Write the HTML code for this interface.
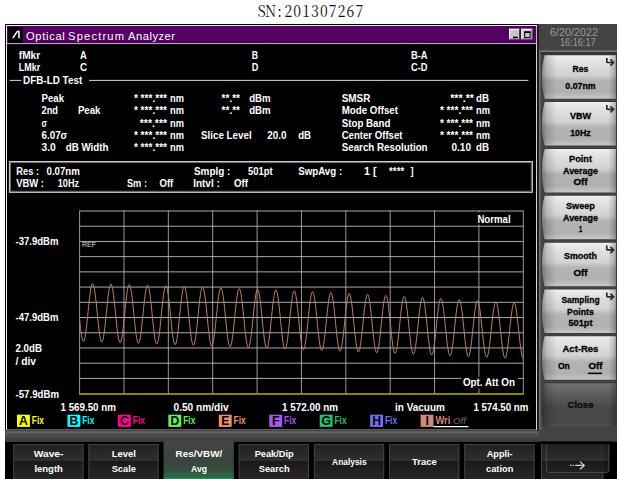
<!DOCTYPE html>
<html><head><meta charset="utf-8"><title>Optical Spectrum Analyzer</title>
<style>html,body{margin:0;padding:0;background:#fff;}body{width:617px;height:479px;overflow:hidden;font-family:"Liberation Sans", sans-serif;}</style>
</head><body>
<svg width="617" height="479" viewBox="0 0 617 479" font-family='"Liberation Sans", sans-serif' style="display:block">
<defs>
<linearGradient id="gbtn" x1="0" y1="0" x2="0" y2="1">
<stop offset="0" stop-color="#efefef"/><stop offset="0.12" stop-color="#e4e4e4"/><stop offset="0.45" stop-color="#d2d2d2"/><stop offset="0.58" stop-color="#b4b4b4"/><stop offset="0.85" stop-color="#b0b0b0"/><stop offset="1" stop-color="#c8c8c8"/>
</linearGradient>
<linearGradient id="gclose" x1="0" y1="0" x2="0" y2="1">
<stop offset="0" stop-color="#747474"/><stop offset="0.2" stop-color="#626262"/><stop offset="0.55" stop-color="#494949"/><stop offset="0.9" stop-color="#484848"/><stop offset="1" stop-color="#505050"/>
</linearGradient>
<linearGradient id="gside" x1="0" y1="0" x2="1" y2="0">
<stop offset="0" stop-color="#000" stop-opacity="0.34"/><stop offset="0.07" stop-color="#000" stop-opacity="0.14"/><stop offset="0.2" stop-color="#000" stop-opacity="0"/><stop offset="0.9" stop-color="#000" stop-opacity="0"/><stop offset="1" stop-color="#000" stop-opacity="0.24"/>
</linearGradient>
<linearGradient id="gbot1" gradientUnits="userSpaceOnUse" x1="0" y1="444" x2="0" y2="479">
<stop offset="0" stop-color="#202020"/><stop offset="0.47" stop-color="#2f2f2f"/><stop offset="0.5" stop-color="#1a1a1a"/><stop offset="1" stop-color="#272727"/>
</linearGradient>
<linearGradient id="gbotA" x1="0" y1="0" x2="0" y2="1">
<stop offset="0" stop-color="#464646"/><stop offset="0.45" stop-color="#3c423e"/><stop offset="0.75" stop-color="#33503f"/><stop offset="0.92" stop-color="#2e6a4a"/><stop offset="1" stop-color="#4cc485"/>
</linearGradient>
<linearGradient id="gband" x1="0" y1="0" x2="0" y2="1">
<stop offset="0" stop-color="#565656"/><stop offset="1" stop-color="#3a3a3a"/>
</linearGradient>
</defs>
<rect x="0.00" y="0.00" width="617.00" height="479.00" fill="#fff" />
<text transform="scale(0.86,1)" x="304.34 314.66 324.97 335.28 345.60 355.91 366.23 376.54 386.85 397.17 407.48 417.80" y="17" text-anchor="middle" font-size="16.4" fill="#111" font-family='"Noto Serif CJK SC", "Liberation Serif", serif'>SN:201307267</text>
<rect x="5.00" y="24.00" width="612.00" height="455.00" fill="#444" />
<rect x="5.00" y="24.00" width="533.70" height="407.00" fill="#000" />
<rect x="6.5" y="25.5" width="530.1" height="404.6" fill="none" stroke="#eee" stroke-width="1"/>
<rect x="7.00" y="26.00" width="529.10" height="17.20" fill="#540062" />
<rect x="8.00" y="27.00" width="15.00" height="15.80" fill="#000" />
<line x1="7.00" y1="43.60" x2="536.30" y2="43.60" stroke="#d0d0d0" stroke-width="0.9" />
<path d="M12.7 38.1 L17.3 31.5 L19 31.5 L19 38.3" fill="none" stroke="#fff" stroke-width="1.5"/>
<text x="26.0" y="40.3" font-size="11.2" font-weight="normal" fill="#fff" textLength="38.8" lengthAdjust="spacing" >Optical</text>
<text x="68.0" y="40.3" font-size="11.2" font-weight="normal" fill="#fff" textLength="56.1" lengthAdjust="spacing" >Spectrum</text>
<text x="128.0" y="40.3" font-size="11.2" font-weight="normal" fill="#fff" textLength="47.0" lengthAdjust="spacing" >Analyzer</text>
<rect x="509.20" y="28.80" width="10.80" height="11.00" fill="#c6c6c6" />
<line x1="509.20" y1="29.30" x2="520.00" y2="29.30" stroke="#fff" stroke-width="1" />
<line x1="509.70" y1="28.80" x2="509.70" y2="39.80" stroke="#fff" stroke-width="1" />
<line x1="509.20" y1="39.30" x2="520.00" y2="39.30" stroke="#404040" stroke-width="1" />
<line x1="519.50" y1="28.80" x2="519.50" y2="39.80" stroke="#404040" stroke-width="1" />
<rect x="513.00" y="36.60" width="4.80" height="1.60" fill="#000" />
<rect x="521.30" y="28.80" width="11.40" height="11.00" fill="#c6c6c6" />
<line x1="521.30" y1="29.30" x2="532.70" y2="29.30" stroke="#fff" stroke-width="1" />
<line x1="521.80" y1="28.80" x2="521.80" y2="39.80" stroke="#fff" stroke-width="1" />
<line x1="521.30" y1="39.30" x2="532.70" y2="39.30" stroke="#404040" stroke-width="1" />
<line x1="532.20" y1="28.80" x2="532.20" y2="39.80" stroke="#404040" stroke-width="1" />
<rect x="524.7" y="32.2" width="5.4" height="5.4" fill="none" stroke="#000" stroke-width="1"/>
<rect x="524.20" y="31.30" width="6.40" height="1.60" fill="#000" />
<text x="18.8" y="58.9" font-size="10.8" font-weight="bold" fill="#fff" textLength="21.4" lengthAdjust="spacingAndGlyphs" >fMkr</text>
<text x="79.9" y="58.9" font-size="10.8" font-weight="bold" fill="#fff" textLength="6.8" lengthAdjust="spacingAndGlyphs" >A</text>
<text x="251.7" y="58.9" font-size="10.8" font-weight="bold" fill="#fff" textLength="6.3" lengthAdjust="spacingAndGlyphs" >B</text>
<text x="411.0" y="58.9" font-size="10.8" font-weight="bold" fill="#fff" textLength="16.6" lengthAdjust="spacingAndGlyphs" >B-A</text>
<text x="18.8" y="71.0" font-size="10.8" font-weight="bold" fill="#fff" textLength="21.4" lengthAdjust="spacingAndGlyphs" >LMkr</text>
<text x="79.9" y="71.0" font-size="10.8" font-weight="bold" fill="#fff" textLength="7.1" lengthAdjust="spacingAndGlyphs" >C</text>
<text x="251.7" y="71.0" font-size="10.8" font-weight="bold" fill="#fff" textLength="6.6" lengthAdjust="spacingAndGlyphs" >D</text>
<text x="411.0" y="71.0" font-size="10.8" font-weight="bold" fill="#fff" textLength="16.6" lengthAdjust="spacingAndGlyphs" >C-D</text>
<line x1="9.50" y1="80.40" x2="21.40" y2="80.40" stroke="#d8d8d8" stroke-width="1" />
<line x1="89.20" y1="80.40" x2="528.40" y2="80.40" stroke="#d8d8d8" stroke-width="1" />
<text x="23.1" y="84.1" font-size="10.8" font-weight="bold" fill="#fff" textLength="59.1" lengthAdjust="spacingAndGlyphs" >DFB-LD Test</text>
<text x="41.5" y="102.1" font-size="10.8" font-weight="bold" fill="#fff" textLength="22.5" lengthAdjust="spacingAndGlyphs" >Peak</text>
<text x="41.5" y="114.3" font-size="10.8" font-weight="bold" fill="#fff" textLength="16.5" lengthAdjust="spacingAndGlyphs" >2nd</text>
<text x="77.9" y="114.3" font-size="10.8" font-weight="bold" fill="#fff" textLength="22.6" lengthAdjust="spacingAndGlyphs" >Peak</text>
<text x="41.5" y="126.6" font-size="10.8" font-weight="bold" fill="#fff" textLength="5.5" lengthAdjust="spacingAndGlyphs" >σ</text>
<text x="41.5" y="138.8" font-size="10.8" font-weight="bold" fill="#fff" textLength="25.8" lengthAdjust="spacingAndGlyphs" >6.07σ</text>
<text x="41.5" y="151.1" font-size="10.8" font-weight="bold" fill="#fff" textLength="14.3" lengthAdjust="spacingAndGlyphs" >3.0</text>
<text x="65.8" y="151.1" font-size="10.8" font-weight="bold" fill="#fff" textLength="42.7" lengthAdjust="spacingAndGlyphs" >dB Width</text>
<text x="133.9" y="102.1" font-size="10.8" font-weight="bold" fill="#fff" textLength="33.1" lengthAdjust="spacingAndGlyphs" >* ***.***</text>
<text x="170.0" y="102.1" font-size="10.8" font-weight="bold" fill="#fff" textLength="13.9" lengthAdjust="spacingAndGlyphs" >nm</text>
<text x="133.9" y="114.3" font-size="10.8" font-weight="bold" fill="#fff" textLength="33.1" lengthAdjust="spacingAndGlyphs" >* ***.***</text>
<text x="170.0" y="114.3" font-size="10.8" font-weight="bold" fill="#fff" textLength="13.9" lengthAdjust="spacingAndGlyphs" >nm</text>
<text x="139.8" y="126.6" font-size="10.8" font-weight="bold" fill="#fff" textLength="27.2" lengthAdjust="spacingAndGlyphs" >***.***</text>
<text x="170.0" y="126.6" font-size="10.8" font-weight="bold" fill="#fff" textLength="13.9" lengthAdjust="spacingAndGlyphs" >nm</text>
<text x="133.9" y="138.8" font-size="10.8" font-weight="bold" fill="#fff" textLength="33.1" lengthAdjust="spacingAndGlyphs" >* ***.***</text>
<text x="170.0" y="138.8" font-size="10.8" font-weight="bold" fill="#fff" textLength="13.9" lengthAdjust="spacingAndGlyphs" >nm</text>
<text x="133.9" y="151.1" font-size="10.8" font-weight="bold" fill="#fff" textLength="33.1" lengthAdjust="spacingAndGlyphs" >* ***.***</text>
<text x="170.0" y="151.1" font-size="10.8" font-weight="bold" fill="#fff" textLength="13.9" lengthAdjust="spacingAndGlyphs" >nm</text>
<text x="221.6" y="102.1" font-size="10.8" font-weight="bold" fill="#fff" textLength="18.4" lengthAdjust="spacingAndGlyphs" >**.**</text>
<text x="249.2" y="102.1" font-size="10.8" font-weight="bold" fill="#fff" textLength="21.4" lengthAdjust="spacingAndGlyphs" >dBm</text>
<text x="221.6" y="114.3" font-size="10.8" font-weight="bold" fill="#fff" textLength="18.4" lengthAdjust="spacingAndGlyphs" >**.**</text>
<text x="249.2" y="114.3" font-size="10.8" font-weight="bold" fill="#fff" textLength="21.4" lengthAdjust="spacingAndGlyphs" >dBm</text>
<text x="201.0" y="138.8" font-size="10.8" font-weight="bold" fill="#fff" textLength="50.7" lengthAdjust="spacingAndGlyphs" >Slice Level</text>
<text x="267.3" y="138.8" font-size="10.8" font-weight="bold" fill="#fff" textLength="19.1" lengthAdjust="spacingAndGlyphs" >20.0</text>
<text x="298.2" y="138.8" font-size="10.8" font-weight="bold" fill="#fff" textLength="12.8" lengthAdjust="spacingAndGlyphs" >dB</text>
<text x="341.7" y="102.1" font-size="10.8" font-weight="bold" fill="#fff" textLength="28.6" lengthAdjust="spacingAndGlyphs" >SMSR</text>
<text x="341.7" y="114.3" font-size="10.8" font-weight="bold" fill="#fff" textLength="56.3" lengthAdjust="spacingAndGlyphs" >Mode Offset</text>
<text x="341.7" y="126.6" font-size="10.8" font-weight="bold" fill="#fff" textLength="48.7" lengthAdjust="spacingAndGlyphs" >Stop Band</text>
<text x="341.7" y="138.8" font-size="10.8" font-weight="bold" fill="#fff" textLength="60.8" lengthAdjust="spacingAndGlyphs" >Center Offset</text>
<text x="341.7" y="151.1" font-size="10.8" font-weight="bold" fill="#fff" textLength="85.9" lengthAdjust="spacingAndGlyphs" >Search Resolution</text>
<text x="450.2" y="102.1" font-size="10.8" font-weight="bold" fill="#fff" textLength="23.8" lengthAdjust="spacingAndGlyphs" >***.**</text>
<text x="476.0" y="102.1" font-size="10.8" font-weight="bold" fill="#fff" textLength="13.0" lengthAdjust="spacingAndGlyphs" >dB</text>
<text x="439.9" y="114.3" font-size="10.8" font-weight="bold" fill="#fff" textLength="33.1" lengthAdjust="spacingAndGlyphs" >* ***.***</text>
<text x="476.0" y="114.3" font-size="10.8" font-weight="bold" fill="#fff" textLength="14.0" lengthAdjust="spacingAndGlyphs" >nm</text>
<text x="439.9" y="126.6" font-size="10.8" font-weight="bold" fill="#fff" textLength="33.1" lengthAdjust="spacingAndGlyphs" >* ***.***</text>
<text x="476.0" y="126.6" font-size="10.8" font-weight="bold" fill="#fff" textLength="14.0" lengthAdjust="spacingAndGlyphs" >nm</text>
<text x="439.9" y="138.8" font-size="10.8" font-weight="bold" fill="#fff" textLength="33.1" lengthAdjust="spacingAndGlyphs" >* ***.***</text>
<text x="476.0" y="138.8" font-size="10.8" font-weight="bold" fill="#fff" textLength="14.0" lengthAdjust="spacingAndGlyphs" >nm</text>
<text x="451.5" y="151.1" font-size="10.8" font-weight="bold" fill="#fff" textLength="19.5" lengthAdjust="spacingAndGlyphs" >0.10</text>
<text x="476.0" y="151.1" font-size="10.8" font-weight="bold" fill="#fff" textLength="13.0" lengthAdjust="spacingAndGlyphs" >dB</text>
<rect x="9.4" y="161.6" width="522.9" height="30.7" fill="none" stroke="#e4e4e4" stroke-width="1"/>
<rect x="10.4" y="162.6" width="520.9" height="28.7" fill="none" stroke="#777" stroke-width="1"/>
<text x="16.3" y="174.7" font-size="10.8" font-weight="bold" fill="#fff" textLength="22.7" lengthAdjust="spacingAndGlyphs" >Res :</text>
<text x="46.5" y="174.7" font-size="10.8" font-weight="bold" fill="#fff" textLength="33.4" lengthAdjust="spacingAndGlyphs" >0.07nm</text>
<text x="194.0" y="174.7" font-size="10.8" font-weight="bold" fill="#fff" textLength="36.4" lengthAdjust="spacingAndGlyphs" >Smplg :</text>
<text x="248.0" y="174.7" font-size="10.8" font-weight="bold" fill="#fff" textLength="24.6" lengthAdjust="spacingAndGlyphs" >501pt</text>
<text x="298.2" y="174.7" font-size="10.8" font-weight="bold" fill="#fff" textLength="44.0" lengthAdjust="spacingAndGlyphs" >SwpAvg :</text>
<text x="364.0" y="174.7" font-size="10.8" font-weight="bold" fill="#fff" textLength="12.6" lengthAdjust="spacingAndGlyphs" >1 [</text>
<text x="389.1" y="174.7" font-size="10.8" font-weight="bold" fill="#fff" textLength="15.1" lengthAdjust="spacingAndGlyphs" >****</text>
<text x="410.5" y="174.7" font-size="10.8" font-weight="bold" fill="#fff" textLength="3.0" lengthAdjust="spacingAndGlyphs" >]</text>
<text x="16.3" y="186.5" font-size="10.8" font-weight="bold" fill="#fff" textLength="27.7" lengthAdjust="spacingAndGlyphs" >VBW :</text>
<text x="57.8" y="186.5" font-size="10.8" font-weight="bold" fill="#fff" textLength="21.3" lengthAdjust="spacingAndGlyphs" >10Hz</text>
<text x="126.9" y="186.5" font-size="10.8" font-weight="bold" fill="#fff" textLength="20.1" lengthAdjust="spacingAndGlyphs" >Sm :</text>
<text x="159.5" y="186.5" font-size="10.8" font-weight="bold" fill="#fff" textLength="13.8" lengthAdjust="spacingAndGlyphs" >Off</text>
<text x="193.2" y="186.5" font-size="10.8" font-weight="bold" fill="#fff" textLength="26.6" lengthAdjust="spacingAndGlyphs" >Intvl :</text>
<text x="234.1" y="186.5" font-size="10.8" font-weight="bold" fill="#fff" textLength="13.9" lengthAdjust="spacingAndGlyphs" >Off</text>
<line x1="79.60" y1="210.60" x2="79.60" y2="394.00" stroke="#a8a8a8" stroke-width="0.9" />
<line x1="123.97" y1="210.60" x2="123.97" y2="394.00" stroke="#a8a8a8" stroke-width="0.9" />
<line x1="168.34" y1="210.60" x2="168.34" y2="394.00" stroke="#a8a8a8" stroke-width="0.9" />
<line x1="212.71" y1="210.60" x2="212.71" y2="394.00" stroke="#a8a8a8" stroke-width="0.9" />
<line x1="257.08" y1="210.60" x2="257.08" y2="394.00" stroke="#a8a8a8" stroke-width="0.9" />
<line x1="301.45" y1="210.60" x2="301.45" y2="394.00" stroke="#a8a8a8" stroke-width="0.9" />
<line x1="345.82" y1="210.60" x2="345.82" y2="394.00" stroke="#a8a8a8" stroke-width="0.9" />
<line x1="390.19" y1="210.60" x2="390.19" y2="394.00" stroke="#a8a8a8" stroke-width="0.9" />
<line x1="434.56" y1="210.60" x2="434.56" y2="394.00" stroke="#a8a8a8" stroke-width="0.9" />
<line x1="478.93" y1="210.60" x2="478.93" y2="394.00" stroke="#a8a8a8" stroke-width="0.9" />
<line x1="523.30" y1="210.60" x2="523.30" y2="394.00" stroke="#a8a8a8" stroke-width="0.9" />
<line x1="79.60" y1="211.00" x2="523.30" y2="211.00" stroke="#bdbdbd" stroke-width="0.9" />
<line x1="79.60" y1="226.22" x2="523.30" y2="226.22" stroke="#bdbdbd" stroke-width="0.9" />
<line x1="79.60" y1="241.44" x2="523.30" y2="241.44" stroke="#bdbdbd" stroke-width="0.9" />
<line x1="79.60" y1="256.65" x2="523.30" y2="256.65" stroke="#bdbdbd" stroke-width="0.9" />
<line x1="79.60" y1="271.87" x2="523.30" y2="271.87" stroke="#bdbdbd" stroke-width="0.9" />
<line x1="79.60" y1="287.09" x2="523.30" y2="287.09" stroke="#bdbdbd" stroke-width="0.9" />
<line x1="79.60" y1="302.31" x2="523.30" y2="302.31" stroke="#bdbdbd" stroke-width="0.9" />
<line x1="79.60" y1="317.53" x2="523.30" y2="317.53" stroke="#bdbdbd" stroke-width="0.9" />
<line x1="79.60" y1="332.75" x2="523.30" y2="332.75" stroke="#bdbdbd" stroke-width="0.9" />
<line x1="79.60" y1="347.96" x2="523.30" y2="347.96" stroke="#bdbdbd" stroke-width="0.9" />
<line x1="79.60" y1="363.18" x2="523.30" y2="363.18" stroke="#bdbdbd" stroke-width="0.9" />
<line x1="79.60" y1="378.40" x2="523.30" y2="378.40" stroke="#bdbdbd" stroke-width="0.9" />
<line x1="79.20" y1="394.00" x2="523.70" y2="394.00" stroke="#b8b000" stroke-width="1.7" />
<path d="M79.6 319.5 L80.1 324.2 L80.6 328.6 L81.1 332.4 L81.6 335.7 L82.1 338.3 L82.6 340.1 L83.1 341.1 L83.6 341.3 L84.1 340.6 L84.6 339.1 L85.1 336.8 L85.6 333.8 L86.1 330.1 L86.6 326.0 L87.1 321.4 L87.6 316.6 L88.1 311.6 L88.6 306.7 L89.1 302.0 L89.6 297.5 L90.1 293.5 L90.6 290.0 L91.1 287.2 L91.6 285.2 L92.1 283.9 L92.6 283.5 L93.1 284.0 L93.6 285.2 L94.1 287.3 L94.6 290.2 L95.1 293.6 L95.6 297.7 L96.1 302.2 L96.6 307.0 L97.1 311.9 L97.6 316.9 L98.1 321.8 L98.6 326.4 L99.1 330.6 L99.6 334.3 L100.1 337.3 L100.6 339.7 L101.1 341.2 L101.6 342.0 L102.1 341.8 L102.6 340.8 L103.1 339.1 L103.6 336.5 L104.1 333.2 L104.6 329.4 L105.1 325.1 L105.6 320.4 L106.1 315.5 L106.6 310.5 L107.1 305.6 L107.6 301.0 L108.1 296.6 L108.6 292.8 L109.1 289.5 L109.6 287.0 L110.1 285.2 L110.6 284.2 L111.1 284.1 L111.6 284.8 L112.1 286.4 L112.6 288.7 L113.1 291.8 L113.6 295.5 L114.1 299.7 L114.6 304.3 L115.1 309.2 L115.6 314.2 L116.1 319.2 L116.6 324.0 L117.1 328.5 L117.6 332.6 L118.1 336.0 L118.6 338.9 L119.1 341.0 L119.6 342.2 L120.1 342.7 L120.6 342.3 L121.1 341.0 L121.6 338.9 L122.1 336.1 L122.6 332.7 L123.1 328.6 L123.6 324.2 L124.1 319.4 L124.6 314.4 L125.1 309.5 L125.6 304.6 L126.1 300.0 L126.6 295.8 L127.1 292.2 L127.6 289.2 L128.1 286.8 L128.6 285.3 L129.1 284.6 L129.6 284.8 L130.1 285.8 L130.6 287.7 L131.1 290.3 L131.6 293.6 L132.1 297.5 L132.6 301.8 L133.1 306.6 L133.6 311.5 L134.1 316.5 L134.6 321.5 L135.1 326.2 L135.6 330.6 L136.1 334.5 L136.6 337.7 L137.1 340.3 L137.6 342.2 L138.1 343.2 L138.6 343.3 L139.1 342.6 L139.6 341.1 L140.1 338.7 L140.6 335.7 L141.1 332.0 L141.6 327.8 L142.1 323.2 L142.6 318.3 L143.1 313.4 L143.6 308.4 L144.1 303.6 L144.6 299.1 L145.1 295.1 L145.6 291.7 L146.1 288.9 L146.6 286.8 L147.1 285.6 L147.6 285.2 L148.1 285.6 L148.6 286.9 L149.1 289.1 L149.6 291.9 L150.1 295.4 L150.6 299.5 L151.1 304.0 L151.6 308.9 L152.1 313.9 L152.6 318.9 L153.1 323.8 L153.6 328.4 L154.1 332.6 L154.6 336.3 L155.1 339.4 L155.6 341.7 L156.1 343.3 L156.6 344.0 L157.1 343.8 L157.6 342.8 L158.1 341.0 L158.6 338.4 L159.1 335.2 L159.6 331.3 L160.1 326.9 L160.6 322.2 L161.1 317.3 L161.6 312.3 L162.1 307.4 L162.6 302.7 L163.1 298.3 L163.6 294.5 L164.1 291.2 L164.6 288.7 L165.1 286.9 L165.6 286.0 L166.1 285.9 L166.6 286.6 L167.1 288.2 L167.6 290.6 L168.1 293.7 L168.6 297.4 L169.1 301.7 L169.6 306.3 L170.1 311.2 L170.6 316.2 L171.1 321.2 L171.6 326.1 L172.1 330.6 L172.6 334.6 L173.1 338.1 L173.6 341.0 L174.1 343.0 L174.6 344.3 L175.1 344.7 L175.6 344.3 L176.1 343.0 L176.6 340.9 L177.1 338.1 L177.6 334.6 L178.1 330.5 L178.6 326.0 L179.1 321.2 L179.6 316.3 L180.1 311.3 L180.6 306.4 L181.1 301.8 L181.6 297.6 L182.1 294.0 L182.6 290.9 L183.1 288.6 L183.6 287.1 L184.1 286.5 L184.6 286.7 L185.1 287.7 L185.6 289.6 L186.1 292.2 L186.6 295.5 L187.1 299.4 L187.6 303.9 L188.1 308.6 L188.6 313.6 L189.1 318.6 L189.6 323.6 L190.1 328.3 L190.6 332.7 L191.1 336.6 L191.6 339.9 L192.1 342.4 L192.6 344.3 L193.1 345.2 L193.6 345.4 L194.1 344.6 L194.6 343.1 L195.1 340.7 L195.6 337.7 L196.1 334.0 L196.6 329.7 L197.1 325.1 L197.6 320.2 L198.1 315.2 L198.6 310.3 L199.1 305.5 L199.6 301.0 L200.1 297.0 L200.6 293.5 L201.1 290.7 L201.6 288.7 L202.1 287.5 L202.6 287.1 L203.1 287.6 L203.6 288.9 L204.1 291.0 L204.6 293.9 L205.1 297.5 L205.6 301.6 L206.1 306.1 L206.6 311.0 L207.1 316.0 L207.6 321.0 L208.1 325.9 L208.6 330.5 L209.1 334.8 L209.6 338.5 L210.1 341.5 L210.6 343.8 L211.1 345.4 L211.6 346.1 L212.1 345.9 L212.6 344.9 L213.1 343.1 L213.6 340.5 L214.1 337.2 L214.6 333.3 L215.1 328.9 L215.6 324.2 L216.1 319.2 L216.6 314.2 L217.1 309.3 L217.6 304.6 L218.1 300.3 L218.6 296.4 L219.1 293.2 L219.6 290.7 L220.1 288.9 L220.6 288.0 L221.1 287.9 L221.6 288.6 L222.1 290.3 L222.6 292.7 L223.1 295.8 L223.6 299.5 L224.1 303.8 L224.6 308.4 L225.1 313.4 L225.6 318.4 L226.1 323.4 L226.6 328.2 L227.1 332.7 L227.6 336.8 L228.1 340.3 L228.6 343.1 L229.1 345.2 L229.6 346.4 L230.1 346.8 L230.6 346.4 L231.1 345.1 L231.6 343.0 L232.1 340.1 L232.6 336.6 L233.1 332.5 L233.6 328.0 L234.1 323.2 L234.6 318.2 L235.1 313.3 L235.6 308.4 L236.1 303.8 L236.6 299.6 L237.1 296.0 L237.6 293.0 L238.1 290.7 L238.6 289.2 L239.1 288.6 L239.6 288.8 L240.1 289.8 L240.6 291.7 L241.1 294.4 L241.6 297.7 L242.1 301.6 L242.6 306.1 L243.1 310.8 L243.6 315.8 L244.1 320.8 L244.6 325.8 L245.1 330.5 L245.6 334.9 L246.1 338.8 L246.6 342.0 L247.1 344.6 L247.6 346.4 L248.1 347.4 L248.6 347.5 L249.1 346.7 L249.6 345.2 L250.1 342.8 L250.6 339.7 L251.1 336.0 L251.6 331.8 L252.1 327.2 L252.6 322.3 L253.1 317.3 L253.6 312.3 L254.1 307.5 L254.6 303.1 L255.1 299.1 L255.6 295.6 L256.1 292.9 L256.6 290.8 L257.1 289.6 L257.6 289.3 L258.1 289.8 L258.6 291.1 L259.1 293.3 L259.6 296.2 L260.1 299.7 L260.6 303.8 L261.1 308.4 L261.6 313.2 L262.1 318.2 L262.6 323.3 L263.1 328.2 L263.6 332.8 L264.1 337.0 L264.6 340.7 L265.1 343.7 L265.6 346.0 L266.1 347.5 L266.6 348.2 L267.1 348.0 L267.6 347.0 L268.1 345.2 L268.6 342.5 L269.1 339.2 L269.6 335.3 L270.1 331.0 L270.6 326.3 L271.1 321.3 L271.6 316.3 L272.1 311.4 L272.6 306.7 L273.1 302.4 L273.6 298.6 L274.1 295.4 L274.6 292.9 L275.1 291.1 L275.6 290.2 L276.1 290.1 L276.6 290.9 L277.1 292.6 L277.6 295.0 L278.1 298.1 L278.6 301.9 L279.1 306.1 L279.6 310.8 L280.1 315.7 L280.6 320.7 L281.1 325.7 L281.6 330.5 L282.1 335.0 L282.6 339.0 L283.1 342.5 L283.6 345.3 L284.1 347.4 L284.6 348.6 L285.1 349.0 L285.6 348.5 L286.1 347.2 L286.6 345.1 L287.1 342.2 L287.6 338.7 L288.1 334.7 L288.6 330.2 L289.1 325.4 L289.6 320.4 L290.1 315.4 L290.6 310.6 L291.1 306.0 L291.6 301.9 L292.1 298.2 L292.6 295.3 L293.1 293.0 L293.6 291.5 L294.1 290.9 L294.6 291.1 L295.1 292.2 L295.6 294.1 L296.1 296.8 L296.6 300.1 L297.1 304.1 L297.6 308.5 L298.1 313.2 L298.6 318.2 L299.1 323.2 L299.6 328.1 L300.1 332.8 L300.6 337.2 L301.1 341.0 L301.6 344.3 L302.1 346.8 L302.6 348.6 L303.1 349.6 L303.6 349.7 L304.1 348.9 L304.6 347.3 L305.1 344.9 L305.6 341.9 L306.1 338.1 L306.6 333.9 L307.1 329.3 L307.6 324.5 L308.1 319.5 L308.6 314.6 L309.1 309.8 L309.6 305.4 L310.1 301.4 L310.6 298.0 L311.1 295.2 L311.6 293.3 L312.1 292.1 L312.6 291.7 L313.1 292.3 L313.6 293.6 L314.1 295.8 L314.6 298.7 L315.1 302.2 L315.6 306.3 L316.1 310.9 L316.6 315.7 L317.1 320.7 L317.6 325.7 L318.1 330.5 L318.6 335.1 L319.1 339.3 L319.6 343.0 L320.1 346.0 L320.6 348.3 L321.1 349.8 L321.6 350.4 L322.1 350.2 L322.6 349.2 L323.1 347.3 L323.6 344.7 L324.1 341.4 L324.6 337.5 L325.1 333.2 L325.6 328.5 L326.1 323.6 L326.6 318.6 L327.1 313.7 L327.6 309.1 L328.1 304.8 L328.6 301.0 L329.1 297.8 L329.6 295.3 L330.1 293.6 L330.6 292.7 L331.1 292.7 L331.6 293.5 L332.1 295.1 L332.6 297.5 L333.1 300.7 L333.6 304.4 L334.1 308.7 L334.6 313.3 L335.1 318.2 L335.6 323.2 L336.1 328.2 L336.6 332.9 L337.1 337.4 L337.6 341.4 L338.1 344.8 L338.6 347.6 L339.1 349.6 L339.6 350.8 L340.1 351.2 L340.6 350.7 L341.1 349.4 L341.6 347.3 L342.1 344.4 L342.6 340.9 L343.1 336.9 L343.6 332.4 L344.1 327.6 L344.6 322.7 L345.1 317.8 L345.6 313.0 L346.1 308.4 L346.6 304.3 L347.1 300.7 L347.6 297.8 L348.1 295.6 L348.6 294.1 L349.1 293.5 L349.6 293.8 L350.1 294.9 L350.6 296.8 L351.1 299.4 L351.6 302.8 L352.1 306.7 L352.6 311.1 L353.1 315.8 L353.6 320.7 L354.1 325.7 L354.6 330.6 L355.1 335.3 L355.6 339.6 L356.1 343.4 L356.6 346.6 L357.1 349.1 L357.6 350.9 L358.1 351.8 L358.6 351.9 L359.1 351.1 L359.6 349.5 L360.1 347.1 L360.6 344.1 L361.1 340.4 L361.6 336.2 L362.1 331.6 L362.6 326.8 L363.1 321.9 L363.6 317.0 L364.1 312.3 L364.6 307.9 L365.1 303.9 L365.6 300.6 L366.1 297.9 L366.6 295.9 L367.1 294.8 L367.6 294.5 L368.1 295.0 L368.6 296.4 L369.1 298.5 L369.6 301.4 L370.1 304.9 L370.6 309.0 L371.1 313.5 L371.6 318.3 L372.1 323.3 L372.6 328.2 L373.1 333.1 L373.6 337.6 L374.1 341.7 L374.6 345.3 L375.1 348.3 L375.6 350.6 L376.1 352.0 L376.6 352.7 L377.1 352.5 L377.6 351.4 L378.1 349.6 L378.6 347.0 L379.1 343.7 L379.6 339.8 L380.1 335.5 L380.6 330.8 L381.1 326.0 L381.6 321.1 L382.1 316.2 L382.6 311.6 L383.1 307.4 L383.6 303.7 L384.1 300.5 L384.6 298.1 L385.1 296.4 L385.6 295.5 L386.1 295.5 L386.6 296.3 L387.1 298.0 L387.6 300.4 L388.1 303.5 L388.6 307.2 L389.1 311.4 L389.6 316.0 L390.1 320.9 L390.6 325.8 L391.1 330.7 L391.6 335.5 L392.1 339.9 L392.6 343.8 L393.1 347.2 L393.6 349.9 L394.1 351.9 L394.6 353.1 L395.1 353.5 L395.6 353.0 L396.1 351.6 L396.6 349.5 L397.1 346.7 L397.6 343.2 L398.1 339.2 L398.6 334.8 L399.1 330.0 L399.6 325.2 L400.1 320.3 L400.6 315.5 L401.1 311.1 L401.6 307.0 L402.1 303.5 L402.6 300.6 L403.1 298.4 L403.6 297.0 L404.1 296.4 L404.6 296.7 L405.1 297.8 L405.6 299.7 L406.1 302.3 L406.6 305.6 L407.1 309.5 L407.6 313.9 L408.1 318.6 L408.6 323.4 L409.1 328.4 L409.6 333.2 L410.1 337.8 L410.6 342.1 L411.1 345.8 L411.6 349.0 L412.1 351.5 L412.6 353.2 L413.1 354.1 L413.6 354.1 L414.1 353.4 L414.6 351.8 L415.1 349.4 L415.6 346.4 L416.1 342.7 L416.6 338.6 L417.1 334.0 L417.6 329.3 L418.1 324.4 L418.6 319.6 L419.1 314.9 L419.6 310.6 L420.1 306.7 L420.6 303.4 L421.1 300.8 L421.6 298.8 L422.1 297.7 L422.6 297.4 L423.1 298.0 L423.6 299.4 L424.1 301.5 L424.6 304.4 L425.1 307.9 L425.6 311.9 L426.1 316.4 L426.6 321.1 L427.1 326.0 L427.6 330.9 L428.1 335.7 L428.6 340.2 L429.1 344.2 L429.6 347.8 L430.1 350.7 L430.6 352.9 L431.1 354.4 L431.6 355.0 L432.1 354.7 L432.6 353.7 L433.1 351.9 L433.6 349.3 L434.1 346.0 L434.6 342.2 L435.1 337.9 L435.6 333.3 L436.1 328.5 L436.6 323.7 L437.1 318.9 L437.6 314.4 L438.1 310.2 L438.6 306.5 L439.1 303.5 L439.6 301.1 L440.1 299.4 L440.6 298.6 L441.1 298.6 L441.6 299.4 L442.1 301.0 L442.6 303.4 L443.1 306.5 L443.6 310.2 L444.1 314.4 L444.6 318.9 L445.1 323.7 L445.6 328.6 L446.1 333.4 L446.6 338.1 L447.1 342.4 L447.6 346.3 L448.1 349.7 L448.6 352.3 L449.1 354.3 L449.6 355.4 L450.1 355.8 L450.6 355.3 L451.1 353.9 L451.6 351.8 L452.1 349.0 L452.6 345.6 L453.1 341.6 L453.6 337.3 L454.1 332.6 L454.6 327.8 L455.1 323.0 L455.6 318.3 L456.1 313.9 L456.6 309.9 L457.1 306.5 L457.6 303.6 L458.1 301.5 L458.6 300.1 L459.1 299.6 L459.6 299.8 L460.1 300.9 L460.6 302.8 L461.1 305.5 L461.6 308.7 L462.1 312.6 L462.6 316.9 L463.1 321.5 L463.6 326.3 L464.1 331.2 L464.6 335.9 L465.1 340.5 L465.6 344.7 L466.1 348.4 L466.6 351.5 L467.1 353.9 L467.6 355.6 L468.1 356.4 L468.6 356.5 L469.1 355.7 L469.6 354.1 L470.1 351.8 L470.6 348.8 L471.1 345.2 L471.6 341.1 L472.1 336.6 L472.6 331.9 L473.1 327.1 L473.6 322.4 L474.1 317.8 L474.6 313.5 L475.1 309.7 L475.6 306.5 L476.1 303.9 L476.6 302.0 L477.1 300.9 L477.6 300.7 L478.1 301.2 L478.6 302.6 L479.1 304.7 L479.6 307.6 L480.1 311.0 L480.6 315.0 L481.1 319.4 L481.6 324.1 L482.1 328.9 L482.6 333.7 L483.1 338.4 L483.6 342.8 L484.1 346.8 L484.6 350.3 L485.1 353.2 L485.6 355.3 L486.1 356.7 L486.6 357.3 L487.1 357.1 L487.6 356.0 L488.1 354.2 L488.6 351.7 L489.1 348.4 L489.6 344.7 L490.1 340.5 L490.6 335.9 L491.1 331.2 L491.6 326.5 L492.1 321.8 L492.6 317.3 L493.1 313.3 L493.6 309.7 L494.1 306.6 L494.6 304.3 L495.1 302.7 L495.6 301.9 L496.1 301.9 L496.6 302.8 L497.1 304.4 L497.6 306.7 L498.1 309.8 L498.6 313.4 L499.1 317.5 L499.6 322.0 L500.1 326.7 L500.6 331.5 L501.1 336.3 L501.6 340.9 L502.1 345.1 L502.6 348.9 L503.1 352.2 L503.6 354.8 L504.1 356.7 L504.6 357.8 L505.1 358.1 L505.6 357.6 L506.1 356.3 L506.6 354.2 L507.1 351.5 L507.6 348.1 L508.1 344.2 L508.6 339.9 L509.1 335.3 L509.6 330.6 L510.1 325.9 L510.6 321.3 L511.1 317.0 L511.6 313.1 L512.1 309.7 L512.6 306.9 L513.1 304.8 L513.6 303.5 L514.1 303.0 L514.6 303.3 L515.1 304.4 L515.6 306.3 L516.1 308.8 L516.6 312.1 L517.1 315.9 L517.6 320.1 L518.1 324.6 L518.6 329.4 L519.1 334.1 L519.6 338.8 L520.1 343.3 L520.6 347.3 L521.1 351.0 L521.6 354.0 L522.1 356.4 L522.6 358.0 L523.1 358.8" fill="none" stroke="#bc806a" stroke-width="1" stroke-linejoin="round"/>
<rect x="476.00" y="212.20" width="37.00" height="12.20" fill="#000" />
<text x="477.4" y="222.5" font-size="10.8" font-weight="bold" fill="#fff" textLength="33.2" lengthAdjust="spacingAndGlyphs" >Normal</text>
<rect x="461.00" y="376.90" width="57.00" height="11.60" fill="#000" />
<text x="463.0" y="386.2" font-size="10.8" font-weight="bold" fill="#fff" textLength="51.9" lengthAdjust="spacingAndGlyphs" >Opt. Att On</text>
<text x="82.0" y="247.0" font-size="7" font-weight="normal" fill="#ddd" textLength="14.0" lengthAdjust="spacingAndGlyphs" >REF</text>
<text x="15.5" y="244.7" font-size="10.8" font-weight="bold" fill="#fff" textLength="42.9" lengthAdjust="spacingAndGlyphs" >-37.9dBm</text>
<text x="15.5" y="321.1" font-size="10.8" font-weight="bold" fill="#fff" textLength="42.9" lengthAdjust="spacingAndGlyphs" >-47.9dBm</text>
<text x="15.5" y="397.9" font-size="10.8" font-weight="bold" fill="#fff" textLength="43.5" lengthAdjust="spacingAndGlyphs" >-57.9dBm</text>
<text x="15.5" y="351.6" font-size="10.8" font-weight="bold" fill="#fff" textLength="26.5" lengthAdjust="spacingAndGlyphs" >2.0dB</text>
<text x="15.5" y="364.6" font-size="10.8" font-weight="bold" fill="#fff" textLength="20.5" lengthAdjust="spacingAndGlyphs" >/ div</text>
<text x="60.5" y="411.0" font-size="10.8" font-weight="bold" fill="#fff" textLength="55.4" lengthAdjust="spacingAndGlyphs" >1 569.50 nm</text>
<text x="173.5" y="411.0" font-size="10.8" font-weight="bold" fill="#fff" textLength="55.2" lengthAdjust="spacingAndGlyphs" >0.50 nm/div</text>
<text x="281.9" y="411.0" font-size="10.8" font-weight="bold" fill="#fff" textLength="56.1" lengthAdjust="spacingAndGlyphs" >1 572.00 nm</text>
<text x="395.0" y="411.0" font-size="10.8" font-weight="bold" fill="#fff" textLength="49.9" lengthAdjust="spacingAndGlyphs" >in Vacuum</text>
<text x="473.4" y="411.0" font-size="10.8" font-weight="bold" fill="#fff" textLength="55.0" lengthAdjust="spacingAndGlyphs" >1 574.50 nm</text>
<rect x="17.00" y="414.70" width="12.90" height="12.20" fill="#ffff00" />
<text x="23.5" y="424.7" text-anchor="middle" font-size="12.2" font-weight="bold" fill="#000" >A</text>
<text x="31.8" y="424.2" font-size="10.3" font-weight="bold" fill="#ffff00" textLength="12.1" lengthAdjust="spacingAndGlyphs" >Fix</text>
<rect x="67.45" y="414.70" width="12.90" height="12.20" fill="#00ffff" />
<text x="74.0" y="424.7" text-anchor="middle" font-size="12.2" font-weight="bold" fill="#000" >B</text>
<text x="82.2" y="424.2" font-size="10.3" font-weight="bold" fill="#00ffff" textLength="12.1" lengthAdjust="spacingAndGlyphs" >Fix</text>
<rect x="117.90" y="414.70" width="12.90" height="12.20" fill="#ff0090" />
<text x="124.4" y="424.7" text-anchor="middle" font-size="12.2" font-weight="bold" fill="#000" >C</text>
<text x="132.7" y="424.2" font-size="10.3" font-weight="bold" fill="#ff0090" textLength="12.1" lengthAdjust="spacingAndGlyphs" >Fix</text>
<rect x="168.35" y="414.70" width="12.90" height="12.20" fill="#60f060" />
<text x="174.9" y="424.7" text-anchor="middle" font-size="12.2" font-weight="bold" fill="#000" >D</text>
<text x="183.2" y="424.2" font-size="10.3" font-weight="bold" fill="#60f060" textLength="12.1" lengthAdjust="spacingAndGlyphs" >Fix</text>
<rect x="218.80" y="414.70" width="12.90" height="12.20" fill="#f09060" />
<text x="225.3" y="424.7" text-anchor="middle" font-size="12.2" font-weight="bold" fill="#000" >E</text>
<text x="233.6" y="424.2" font-size="10.3" font-weight="bold" fill="#f09060" textLength="12.1" lengthAdjust="spacingAndGlyphs" >Fix</text>
<rect x="269.25" y="414.70" width="12.90" height="12.20" fill="#a855f5" />
<text x="275.8" y="424.7" text-anchor="middle" font-size="12.2" font-weight="bold" fill="#000" >F</text>
<text x="284.1" y="424.2" font-size="10.3" font-weight="bold" fill="#a855f5" textLength="12.1" lengthAdjust="spacingAndGlyphs" >Fix</text>
<rect x="319.70" y="414.70" width="12.90" height="12.20" fill="#20c070" />
<text x="326.2" y="424.7" text-anchor="middle" font-size="12.2" font-weight="bold" fill="#000" >G</text>
<text x="334.5" y="424.2" font-size="10.3" font-weight="bold" fill="#20c070" textLength="12.1" lengthAdjust="spacingAndGlyphs" >Fix</text>
<rect x="370.15" y="414.70" width="12.90" height="12.20" fill="#7070f0" />
<text x="376.7" y="424.7" text-anchor="middle" font-size="12.2" font-weight="bold" fill="#000" >H</text>
<text x="385.0" y="424.2" font-size="10.3" font-weight="bold" fill="#7070f0" textLength="12.1" lengthAdjust="spacingAndGlyphs" >Fix</text>
<rect x="420.60" y="414.70" width="12.90" height="12.20" fill="#d08878" />
<text x="427.1" y="424.7" text-anchor="middle" font-size="12.2" font-weight="bold" fill="#000" >I</text>
<text x="435.4" y="424.2" font-size="10.3" font-weight="bold" fill="#d08878" textLength="15.0" lengthAdjust="spacingAndGlyphs" >Wri</text>
<text x="452.9" y="424.4" font-size="9" font-weight="normal" fill="#707070" textLength="13.0" lengthAdjust="spacingAndGlyphs" font-style="italic">Off</text>
<line x1="433.40" y1="426.60" x2="468.40" y2="426.60" stroke="#fff" stroke-width="1.2" />
<rect x="538.70" y="24.00" width="79.00" height="418.00" fill="#444" />
<text x="550.1" y="36.0" font-size="10.6" font-weight="normal" fill="#9a9a9a" textLength="47.8" lengthAdjust="spacingAndGlyphs" >6/20/2022</text>
<text x="559.9" y="45.6" font-size="10.6" font-weight="normal" fill="#9a9a9a" textLength="35.7" lengthAdjust="spacingAndGlyphs" >16:16:17</text>
<line x1="539.50" y1="51.20" x2="617.00" y2="51.20" stroke="#7a7a7a" stroke-width="1.5" />
<line x1="539.80" y1="50.20" x2="539.80" y2="430.00" stroke="#707070" stroke-width="1.4" />
<rect x="540.60" y="52.00" width="77.00" height="3.20" fill="#343434" />
<path d="M544.7 55.2 L615.8 55.2 L615.8 98.7 L544.7 98.7 C541.1 85.65 541.1 68.25 544.7 55.2 Z" fill="none" stroke="#3a3a3a" stroke-width="1.8"/>
<path d="M544.7 55.2 L615.8 55.2 L615.8 98.7 L544.7 98.7 C541.1 85.65 541.1 68.25 544.7 55.2 Z" fill="url(#gbtn)"/>
<path d="M544.7 55.2 L615.8 55.2 L615.8 98.7 L544.7 98.7 C541.1 85.65 541.1 68.25 544.7 55.2 Z" fill="url(#gside)"/>
<text x="572.6" y="71.8" font-size="9.8" font-weight="bold" fill="#000" textLength="15.8" lengthAdjust="spacingAndGlyphs" stroke="#000" stroke-width="0.3">Res</text>
<text x="565.3" y="88.8" font-size="9.8" font-weight="bold" fill="#000" textLength="30.4" lengthAdjust="spacingAndGlyphs" stroke="#000" stroke-width="0.3">0.07nm</text>
<path d="M606.8 58.1 L606.8 61.5 Q606.8 62.5 607.8 62.5 L613.0 62.5 M610.4 59.4 L613.5999999999999 62.5 L610.4 65.6" fill="none" stroke="#2a2a2a" stroke-width="1.7"/>
<path d="M544.7 102.06 L615.8 102.06 L615.8 145.56 L544.7 145.56 C541.1 132.51 541.1 115.11 544.7 102.06 Z" fill="none" stroke="#3a3a3a" stroke-width="1.8"/>
<path d="M544.7 102.06 L615.8 102.06 L615.8 145.56 L544.7 145.56 C541.1 132.51 541.1 115.11 544.7 102.06 Z" fill="url(#gbtn)"/>
<path d="M544.7 102.06 L615.8 102.06 L615.8 145.56 L544.7 145.56 C541.1 132.51 541.1 115.11 544.7 102.06 Z" fill="url(#gside)"/>
<text x="569.9" y="118.7" font-size="9.8" font-weight="bold" fill="#000" textLength="21.3" lengthAdjust="spacingAndGlyphs" stroke="#000" stroke-width="0.3">VBW</text>
<text x="570.2" y="135.7" font-size="9.8" font-weight="bold" fill="#000" textLength="20.6" lengthAdjust="spacingAndGlyphs" stroke="#000" stroke-width="0.3">10Hz</text>
<path d="M606.8 104.96000000000001 L606.8 108.36000000000001 Q606.8 109.36000000000001 607.8 109.36000000000001 L613.0 109.36000000000001 M610.4 106.26 L613.5999999999999 109.36000000000001 L610.4 112.46000000000001" fill="none" stroke="#2a2a2a" stroke-width="1.7"/>
<path d="M544.7 148.92000000000002 L615.8 148.92000000000002 L615.8 192.42000000000002 L544.7 192.42000000000002 C541.1 179.37 541.1 161.97000000000003 544.7 148.92000000000002 Z" fill="none" stroke="#3a3a3a" stroke-width="1.8"/>
<path d="M544.7 148.92000000000002 L615.8 148.92000000000002 L615.8 192.42000000000002 L544.7 192.42000000000002 C541.1 179.37 541.1 161.97000000000003 544.7 148.92000000000002 Z" fill="url(#gbtn)"/>
<path d="M544.7 148.92000000000002 L615.8 148.92000000000002 L615.8 192.42000000000002 L544.7 192.42000000000002 C541.1 179.37 541.1 161.97000000000003 544.7 148.92000000000002 Z" fill="url(#gside)"/>
<text x="569.0" y="162.4" font-size="9.8" font-weight="bold" fill="#000" textLength="23.0" lengthAdjust="spacingAndGlyphs" stroke="#000" stroke-width="0.3">Point</text>
<text x="563.0" y="173.9" font-size="9.8" font-weight="bold" fill="#000" textLength="35.0" lengthAdjust="spacingAndGlyphs" stroke="#000" stroke-width="0.3">Average</text>
<text x="573.4" y="185.3" font-size="9.8" font-weight="bold" fill="#000" textLength="14.2" lengthAdjust="spacingAndGlyphs" stroke="#000" stroke-width="0.3">Off</text>
<path d="M544.7 195.77999999999997 L615.8 195.77999999999997 L615.8 239.27999999999997 L544.7 239.27999999999997 C541.1 226.22999999999996 541.1 208.82999999999998 544.7 195.77999999999997 Z" fill="none" stroke="#3a3a3a" stroke-width="1.8"/>
<path d="M544.7 195.77999999999997 L615.8 195.77999999999997 L615.8 239.27999999999997 L544.7 239.27999999999997 C541.1 226.22999999999996 541.1 208.82999999999998 544.7 195.77999999999997 Z" fill="url(#gbtn)"/>
<path d="M544.7 195.77999999999997 L615.8 195.77999999999997 L615.8 239.27999999999997 L544.7 239.27999999999997 C541.1 226.22999999999996 541.1 208.82999999999998 544.7 195.77999999999997 Z" fill="url(#gside)"/>
<text x="566.0" y="209.3" font-size="9.8" font-weight="bold" fill="#000" textLength="28.9" lengthAdjust="spacingAndGlyphs" stroke="#000" stroke-width="0.3">Sweep</text>
<text x="563.0" y="220.8" font-size="9.8" font-weight="bold" fill="#000" textLength="35.0" lengthAdjust="spacingAndGlyphs" stroke="#000" stroke-width="0.3">Average</text>
<text x="578.9" y="232.2" font-size="9.8" font-weight="bold" fill="#000" textLength="3.2" lengthAdjust="spacingAndGlyphs" stroke="#000" stroke-width="0.3">1</text>
<path d="M544.7 242.64 L615.8 242.64 L615.8 286.14 L544.7 286.14 C541.1 273.09 541.1 255.69 544.7 242.64 Z" fill="none" stroke="#3a3a3a" stroke-width="1.8"/>
<path d="M544.7 242.64 L615.8 242.64 L615.8 286.14 L544.7 286.14 C541.1 273.09 541.1 255.69 544.7 242.64 Z" fill="url(#gbtn)"/>
<path d="M544.7 242.64 L615.8 242.64 L615.8 286.14 L544.7 286.14 C541.1 273.09 541.1 255.69 544.7 242.64 Z" fill="url(#gside)"/>
<text x="564.0" y="259.2" font-size="9.8" font-weight="bold" fill="#000" textLength="32.9" lengthAdjust="spacingAndGlyphs" stroke="#000" stroke-width="0.3">Smooth</text>
<text x="573.4" y="276.2" font-size="9.8" font-weight="bold" fill="#000" textLength="14.2" lengthAdjust="spacingAndGlyphs" stroke="#000" stroke-width="0.3">Off</text>
<path d="M606.8 245.54 L606.8 248.94 Q606.8 249.94 607.8 249.94 L613.0 249.94 M610.4 246.84 L613.5999999999999 249.94 L610.4 253.04" fill="none" stroke="#2a2a2a" stroke-width="1.7"/>
<path d="M544.7 289.5 L615.8 289.5 L615.8 333.0 L544.7 333.0 C541.1 319.95 541.1 302.55 544.7 289.5 Z" fill="none" stroke="#3a3a3a" stroke-width="1.8"/>
<path d="M544.7 289.5 L615.8 289.5 L615.8 333.0 L544.7 333.0 C541.1 319.95 541.1 302.55 544.7 289.5 Z" fill="url(#gbtn)"/>
<path d="M544.7 289.5 L615.8 289.5 L615.8 333.0 L544.7 333.0 C541.1 319.95 541.1 302.55 544.7 289.5 Z" fill="url(#gside)"/>
<text x="561.4" y="303.0" font-size="9.8" font-weight="bold" fill="#000" textLength="38.2" lengthAdjust="spacingAndGlyphs" stroke="#000" stroke-width="0.3">Sampling</text>
<text x="567.1" y="314.5" font-size="9.8" font-weight="bold" fill="#000" textLength="26.8" lengthAdjust="spacingAndGlyphs" stroke="#000" stroke-width="0.3">Points</text>
<text x="568.5" y="325.9" font-size="9.8" font-weight="bold" fill="#000" textLength="24.0" lengthAdjust="spacingAndGlyphs" stroke="#000" stroke-width="0.3">501pt</text>
<path d="M606.8 292.4 L606.8 295.79999999999995 Q606.8 296.79999999999995 607.8 296.79999999999995 L613.0 296.79999999999995 M610.4 293.7 L613.5999999999999 296.79999999999995 L610.4 299.9" fill="none" stroke="#2a2a2a" stroke-width="1.7"/>
<path d="M544.7 336.35999999999996 L615.8 336.35999999999996 L615.8 379.85999999999996 L544.7 379.85999999999996 C541.1 366.80999999999995 541.1 349.40999999999997 544.7 336.35999999999996 Z" fill="none" stroke="#3a3a3a" stroke-width="1.8"/>
<path d="M544.7 336.35999999999996 L615.8 336.35999999999996 L615.8 379.85999999999996 L544.7 379.85999999999996 C541.1 366.80999999999995 541.1 349.40999999999997 544.7 336.35999999999996 Z" fill="url(#gbtn)"/>
<path d="M544.7 336.35999999999996 L615.8 336.35999999999996 L615.8 379.85999999999996 L544.7 379.85999999999996 C541.1 366.80999999999995 541.1 349.40999999999997 544.7 336.35999999999996 Z" fill="url(#gside)"/>
<text x="562.5" y="352.4" font-size="9.8" font-weight="bold" fill="#000" textLength="35.9" lengthAdjust="spacingAndGlyphs" stroke="#000" stroke-width="0.3">Act-Res</text>
<text x="557.9" y="369.0" font-size="9.8" font-weight="bold" fill="#000" textLength="12.0" lengthAdjust="spacingAndGlyphs" stroke="#000" stroke-width="0.3">On</text>
<text x="588.4" y="369.0" font-size="9.8" font-weight="bold" fill="#000" textLength="14.0" lengthAdjust="spacingAndGlyphs" stroke="#000" stroke-width="0.3">Off</text>
<line x1="587.90" y1="373.36" x2="602.10" y2="373.36" stroke="#000" stroke-width="1.5" />
<path d="M544.7 383.21999999999997 L615.8 383.21999999999997 L615.8 426.71999999999997 L544.7 426.71999999999997 C541.1 413.66999999999996 541.1 396.27 544.7 383.21999999999997 Z" fill="none" stroke="#3a3a3a" stroke-width="1.8"/>
<path d="M544.7 383.21999999999997 L615.8 383.21999999999997 L615.8 426.71999999999997 L544.7 426.71999999999997 C541.1 413.66999999999996 541.1 396.27 544.7 383.21999999999997 Z" fill="url(#gclose)"/>
<path d="M544.7 383.21999999999997 L615.8 383.21999999999997 L615.8 426.71999999999997 L544.7 426.71999999999997 C541.1 413.66999999999996 541.1 396.27 544.7 383.21999999999997 Z" fill="url(#gside)"/>
<text x="567.5" y="408.2" font-size="9.8" font-weight="bold" fill="#141414" textLength="26.0" lengthAdjust="spacingAndGlyphs" stroke="#000" stroke-width="0.3">Close</text>
<rect x="5.00" y="441.60" width="612.00" height="38.00" fill="#000" />
<line x1="5.00" y1="430.90" x2="539.00" y2="430.90" stroke="#2a2a2a" stroke-width="1.2" />
<rect x="5.00" y="431.60" width="533.70" height="10.20" fill="url(#gband)" />
<line x1="5.00" y1="432.00" x2="539.00" y2="432.00" stroke="#777" stroke-width="1" />
<rect x="13.20" y="444.00" width="70.30" height="36.00" fill="url(#gbot1)" />
<path d="M13.7 479 L13.7 444.5 L83.0 444.5 L83.0 479" fill="none" stroke="#424242" stroke-width="1"/>
<text x="33.7" y="457.1" font-size="9.5" font-weight="bold" fill="#fff" textLength="29.8" lengthAdjust="spacingAndGlyphs" >Wave-</text>
<text x="34.4" y="471.9" font-size="9.5" font-weight="bold" fill="#fff" textLength="28.5" lengthAdjust="spacingAndGlyphs" >length</text>
<rect x="88.37" y="444.00" width="70.30" height="36.00" fill="url(#gbot1)" />
<path d="M88.87 479 L88.87 444.5 L158.17000000000002 444.5 L158.17000000000002 479" fill="none" stroke="#424242" stroke-width="1"/>
<text x="111.8" y="457.1" font-size="9.5" font-weight="bold" fill="#fff" textLength="24.1" lengthAdjust="spacingAndGlyphs" >Level</text>
<text x="111.7" y="471.9" font-size="9.5" font-weight="bold" fill="#fff" textLength="24.2" lengthAdjust="spacingAndGlyphs" >Scale</text>
<rect x="163.54" y="440.70" width="70.30" height="40.00" fill="url(#gbotA)" />
<text x="175.6" y="457.1" font-size="9.5" font-weight="bold" fill="#fff" textLength="46.7" lengthAdjust="spacingAndGlyphs" >Res/VBW/</text>
<text x="191.0" y="471.9" font-size="9.5" font-weight="bold" fill="#fff" textLength="16.0" lengthAdjust="spacingAndGlyphs" >Avg</text>
<rect x="238.71" y="444.00" width="70.30" height="36.00" fill="url(#gbot1)" />
<path d="M239.20999999999998 479 L239.20999999999998 444.5 L308.51 444.5 L308.51 479" fill="none" stroke="#424242" stroke-width="1"/>
<text x="254.7" y="457.1" font-size="9.5" font-weight="bold" fill="#fff" textLength="38.9" lengthAdjust="spacingAndGlyphs" >Peak/Dip</text>
<text x="258.7" y="471.9" font-size="9.5" font-weight="bold" fill="#fff" textLength="31.0" lengthAdjust="spacingAndGlyphs" >Search</text>
<rect x="313.88" y="444.00" width="70.30" height="36.00" fill="url(#gbot1)" />
<path d="M314.38 479 L314.38 444.5 L383.68 444.5 L383.68 479" fill="none" stroke="#424242" stroke-width="1"/>
<text x="332.1" y="465.0" font-size="9.5" font-weight="bold" fill="#fff" textLength="34.5" lengthAdjust="spacingAndGlyphs" >Analysis</text>
<rect x="389.05" y="444.00" width="70.30" height="36.00" fill="url(#gbot1)" />
<path d="M389.55 479 L389.55 444.5 L458.85 444.5 L458.85 479" fill="none" stroke="#424242" stroke-width="1"/>
<text x="412.1" y="465.0" font-size="9.5" font-weight="bold" fill="#fff" textLength="24.7" lengthAdjust="spacingAndGlyphs" >Trace</text>
<rect x="464.22" y="444.00" width="70.30" height="36.00" fill="url(#gbot1)" />
<path d="M464.71999999999997 479 L464.71999999999997 444.5 L534.02 444.5 L534.02 479" fill="none" stroke="#424242" stroke-width="1"/>
<text x="486.7" y="457.1" font-size="9.5" font-weight="bold" fill="#fff" textLength="26.0" lengthAdjust="spacingAndGlyphs" >Appli-</text>
<text x="486.0" y="471.9" font-size="9.5" font-weight="bold" fill="#fff" textLength="27.3" lengthAdjust="spacingAndGlyphs" >cation</text>
<rect x="541.5" y="443" width="61.5" height="40" rx="2" fill="url(#gbot1)" stroke="#454545" stroke-width="1"/>
<rect x="546.4" y="443" width="62.5" height="29.5" rx="2.5" fill="url(#gbot1)" fill-opacity="0.85" stroke="#4a4a4a" stroke-width="1"/>
<rect x="540.00" y="441.60" width="72.00" height="2.40" fill="#000" />
<path d="M570 465.4 L571.4 465.4 M572.6 465.4 L574 465.4 M575.2 465.4 L584 465.4 M580 461.6 L584.3 465.4 L580 469.2" fill="none" stroke="#d8d8d8" stroke-width="1.2"/>
</svg>
</body></html>
